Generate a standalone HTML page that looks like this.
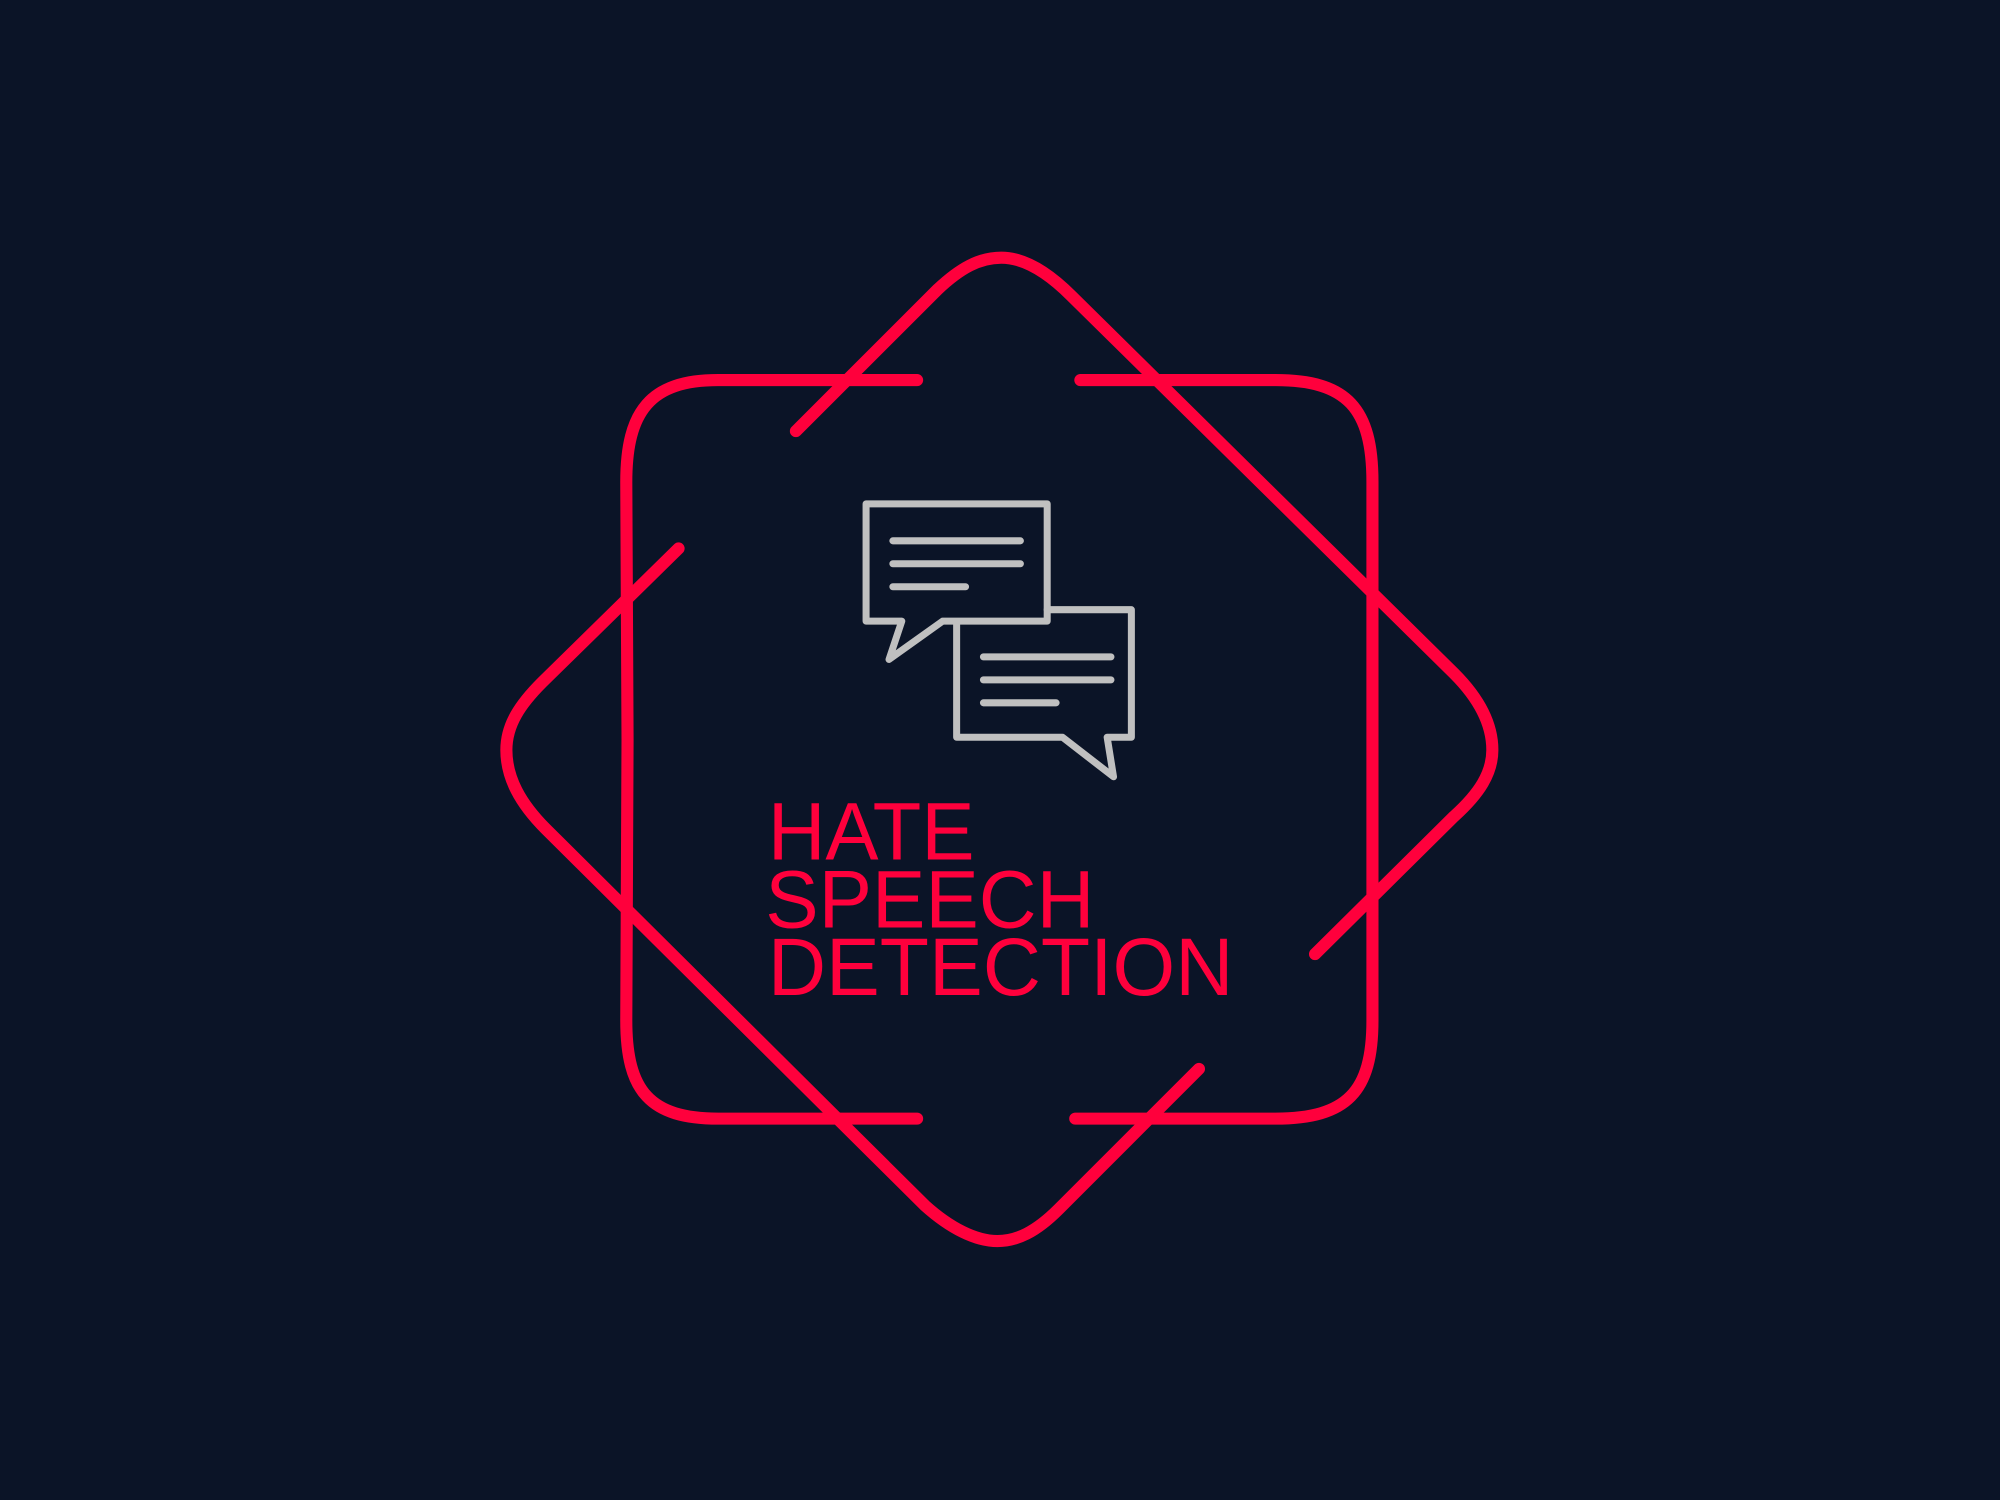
<!DOCTYPE html>
<html><head><meta charset="utf-8"><style>
html,body{margin:0;padding:0;background:#0b1427;}
svg{display:block;}
</style></head><body>
<svg width="2000" height="1500" viewBox="0 0 1568 1176" xmlns="http://www.w3.org/2000/svg">
<rect width="1568" height="1176" fill="#0b1427"/>
<g fill="none" stroke="#ff003c" stroke-width="9.5" stroke-linecap="round" stroke-linejoin="round">
<path d="M719,298 L563,298 C510,298 491,322 491,378 L492,580 L491,800 C491,856 510,877 563,877 L719,877"/>
<path d="M847,298 L1000,298 C1056,298 1076,320 1076,378 L1076,580 L1076,800 C1076,856 1056,877 1000,877 L843,877"/>
<path d="M624,338 L735,227 C753,210 768,202 785,202 C802,202 820,212 840,232 L1140,528 C1160,548 1170,568 1170,588 C1170,606 1160,622 1140,640 L1031,748"/>
<path d="M940,838 L830,948 C812,966 797,973 782,973 C765,973 745,963 725,945 L428,650 C408,630 397,610 397,588 C397,568 408,552 425,535 L532,430"/>
</g>
<g fill="none" stroke="#c0c0c0" stroke-width="5.5" stroke-linecap="round" stroke-linejoin="round">
<path d="M707,487 L679,487 L679,395 L821,395 L821,487 L739,487 L697,517 Z"/>
<path d="M821,478 L887,478 L887,578 L868,578 L873,609 L833,578 L750,578 L750,488"/>
<path d="M700,424 H800 M700,442 H800 M700,460 H757 M771,515 H871 M771,533 H871 M771,551 H828"/>
</g>
<g fill="#ff003c" font-family="'Liberation Sans', sans-serif" font-size="64">
<text x="602" y="674" textLength="162" lengthAdjust="spacingAndGlyphs">HATE</text>
<text x="600" y="727" textLength="258" lengthAdjust="spacingAndGlyphs">SPEECH</text>
<text x="602" y="780" textLength="365" lengthAdjust="spacingAndGlyphs">DETECTION</text>
</g>
</svg>
</body></html>
